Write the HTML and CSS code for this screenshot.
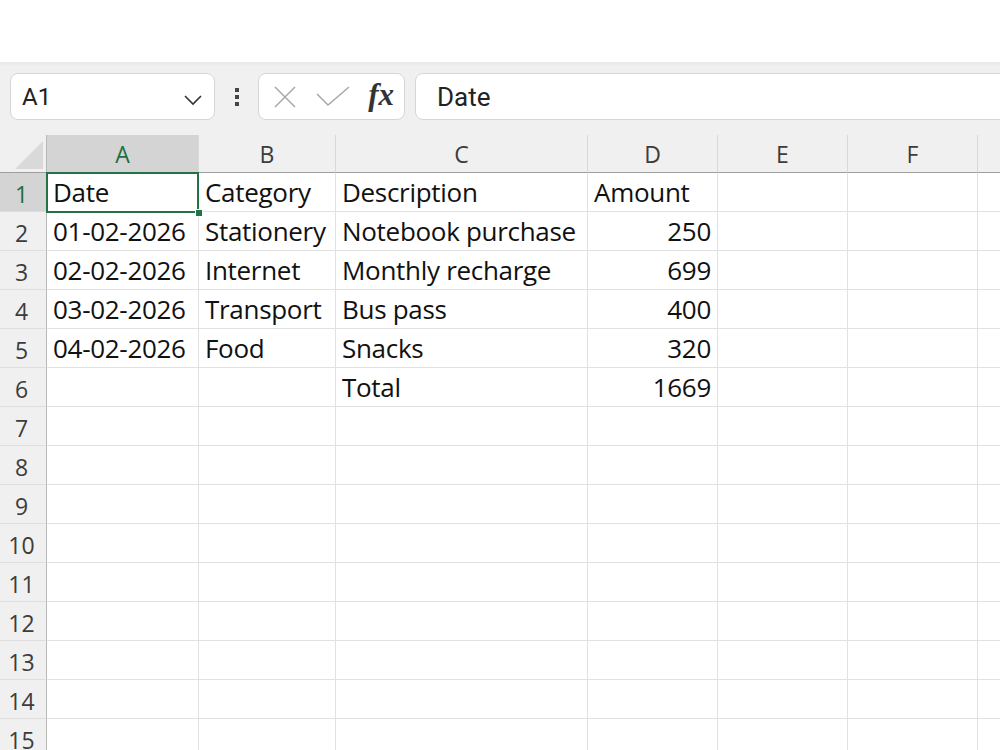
FILE: index.html
```html
<!DOCTYPE html>
<html lang="en">
  <head>
    <meta charset="UTF-8">
    <meta name="viewport" content="width=device-width, initial-scale=1.0">
    <title>Expenses</title>
    <link rel="stylesheet" href="styles.css">
  </head>
  <body>
    <div class="top-blank"></div>

    <div class="toolbar">
      <div class="name-box">
        <span>A1</span>
        <svg class="chevron" width="20" height="12" viewBox="0 0 20 12">
          <path d="M2 2 L10 10 L18 2" fill="none" stroke="#333" stroke-width="1.6"/>
        </svg>
      </div>
      <div class="more">
        <svg width="6" height="20" viewBox="0 0 6 20">
          <rect x="1" y="1" width="4" height="4" fill="#444"/>
          <rect x="1" y="8" width="4" height="4" fill="#444"/>
          <rect x="1" y="15" width="4" height="4" fill="#444"/>
        </svg>
      </div>
      <div class="fx-box">
        <svg width="24" height="24" viewBox="0 0 24 24">
          <path d="M2 2 L22 22 M22 2 L2 22" stroke="#a8a8a8" stroke-width="1.5"/>
        </svg>
        <svg width="34" height="22" viewBox="0 0 34 22">
          <path d="M1 8 L12 19 L33 1" fill="none" stroke="#a8a8a8" stroke-width="1.5"/>
        </svg>
        <span class="fx">fx</span>
      </div>
      <div class="formula">Date</div>
    </div>

    <div class="sheet">
      <div class="corner"><span class="tri"></span></div>
      <div class="col-head selected">A</div>
      <div class="col-head">B</div>
      <div class="col-head">C</div>
      <div class="col-head">D</div>
      <div class="col-head">E</div>
      <div class="col-head">F</div>
      <div class="col-head"></div>

      <div class="row-head selected">1</div>
      <div class="cell active">Date</div>
      <div class="cell">Category</div>
      <div class="cell">Description</div>
      <div class="cell">Amount</div>
      <div class="cell"></div><div class="cell"></div><div class="cell"></div>

      <div class="row-head">2</div>
      <div class="cell">01-02-2026</div>
      <div class="cell">Stationery</div>
      <div class="cell">Notebook purchase</div>
      <div class="cell num">250</div>
      <div class="cell"></div><div class="cell"></div><div class="cell"></div>

      <div class="row-head">3</div>
      <div class="cell">02-02-2026</div>
      <div class="cell">Internet</div>
      <div class="cell">Monthly recharge</div>
      <div class="cell num">699</div>
      <div class="cell"></div><div class="cell"></div><div class="cell"></div>

      <div class="row-head">4</div>
      <div class="cell">03-02-2026</div>
      <div class="cell">Transport</div>
      <div class="cell">Bus pass</div>
      <div class="cell num">400</div>
      <div class="cell"></div><div class="cell"></div><div class="cell"></div>

      <div class="row-head">5</div>
      <div class="cell">04-02-2026</div>
      <div class="cell">Food</div>
      <div class="cell">Snacks</div>
      <div class="cell num">320</div>
      <div class="cell"></div><div class="cell"></div><div class="cell"></div>

      <div class="row-head">6</div>
      <div class="cell"></div>
      <div class="cell"></div>
      <div class="cell">Total</div>
      <div class="cell num">1669</div>
      <div class="cell"></div><div class="cell"></div><div class="cell"></div>

      <div class="row-head">7</div>
      <div class="cell"></div><div class="cell"></div><div class="cell"></div><div class="cell"></div><div class="cell"></div><div class="cell"></div><div class="cell"></div>
      <div class="row-head">8</div>
      <div class="cell"></div><div class="cell"></div><div class="cell"></div><div class="cell"></div><div class="cell"></div><div class="cell"></div><div class="cell"></div>
      <div class="row-head">9</div>
      <div class="cell"></div><div class="cell"></div><div class="cell"></div><div class="cell"></div><div class="cell"></div><div class="cell"></div><div class="cell"></div>
      <div class="row-head">10</div>
      <div class="cell"></div><div class="cell"></div><div class="cell"></div><div class="cell"></div><div class="cell"></div><div class="cell"></div><div class="cell"></div>
      <div class="row-head">11</div>
      <div class="cell"></div><div class="cell"></div><div class="cell"></div><div class="cell"></div><div class="cell"></div><div class="cell"></div><div class="cell"></div>
      <div class="row-head">12</div>
      <div class="cell"></div><div class="cell"></div><div class="cell"></div><div class="cell"></div><div class="cell"></div><div class="cell"></div><div class="cell"></div>
      <div class="row-head">13</div>
      <div class="cell"></div><div class="cell"></div><div class="cell"></div><div class="cell"></div><div class="cell"></div><div class="cell"></div><div class="cell"></div>
      <div class="row-head">14</div>
      <div class="cell"></div><div class="cell"></div><div class="cell"></div><div class="cell"></div><div class="cell"></div><div class="cell"></div><div class="cell"></div>
      <div class="row-head">15</div>
      <div class="cell"></div><div class="cell"></div><div class="cell"></div><div class="cell"></div><div class="cell"></div><div class="cell"></div><div class="cell"></div>
    </div>
  </body>
</html>
```

FILE: styles.css
```css
body {
  margin: 0;
  padding: 0;
  background-color: #fff;
  font-family: "Open Sans", "Noto Sans", sans-serif;
  color: #111;
  overflow: hidden;
  width: 1000px;
  height: 750px;
}

.top-blank {
  height: 62px;
  background-color: #fff;
}

.toolbar {
  height: 73px;
  box-sizing: border-box;
  padding: 11px 0 0 10px;
  display: flex;
  align-items: flex-start;
  background: linear-gradient(#e8e8e8, #f0f0f0 4px);
}

.name-box,
.fx-box,
.formula {
  height: 47px;
  box-sizing: border-box;
  background-color: #fff;
  border: 1px solid #d6d6d6;
  border-radius: 8px;
  display: flex;
  align-items: center;
}

.name-box {
  width: 205px;
  padding: 0 11px 0 11px;
  justify-content: space-between;
  font-family: Roboto, "Open Sans", sans-serif;
  font-size: 24px;
  color: #222;
}

.chevron {
  margin-top: 6px;
}

.more {
  width: 43px;
  height: 47px;
  display: flex;
  align-items: center;
  justify-content: center;
}

.fx-box {
  width: 147px;
  padding: 0 10px 0 14px;
  justify-content: space-between;
}

.fx {
  font-family: "Liberation Serif", serif;
  font-style: italic;
  font-weight: bold;
  font-size: 31px;
  color: #333;
  margin-top: -4px;
}

.formula {
  flex: 1;
  margin-left: 10px;
  margin-right: -20px;
  padding-left: 21px;
  font-family: Roboto, "Open Sans", sans-serif;
  font-size: 26px;
  color: #222;
}

.sheet {
  display: grid;
  grid-template-columns: 47px 152px 137px 252px 130px 130px 130px 130px;
  grid-template-rows: 38px;
  grid-auto-rows: 39px;
  background-color: #fff;
}

.corner,
.col-head,
.row-head {
  background-color: #f0f0f0;
  color: #3c3c3c;
  font-size: 23px;
  box-sizing: border-box;
}

.corner {
  position: relative;
  border-right: 1px solid #b8b8b8;
  border-bottom: 1px solid #9e9e9e;
}

.tri {
  position: absolute;
  right: 3px;
  bottom: 3px;
  width: 0;
  height: 0;
  border-left: 28px solid transparent;
  border-bottom: 28px solid #d9d9d9;
}

.col-head {
  display: flex;
  align-items: center;
  justify-content: center;
  border-right: 1px solid #d8d8d8;
  border-bottom: 1px solid #9e9e9e;
  padding-top: 1px;
}

.row-head {
  display: flex;
  align-items: flex-end;
  justify-content: center;
  padding: 0 3px 5px 0;
  border-right: 1px solid #b8b8b8;
  border-bottom: 1px solid #dedede;
  line-height: 1;
}

.col-head.selected,
.row-head.selected {
  background-color: #d4d4d4;
  color: #1e6e41;
}

.cell {
  display: flex;
  align-items: flex-end;
  box-sizing: border-box;
  padding: 0 6px 6px 6px;
  font-size: 26px;
  line-height: 26px;
  letter-spacing: -0.3px;
  white-space: nowrap;
  border-right: 1px solid #e1e1e1;
  border-bottom: 1px solid #e1e1e1;
}

.cell.num {
  justify-content: flex-end;
}

.cell.active {
  position: relative;
}

.cell.active::before {
  content: "";
  position: absolute;
  left: -1px;
  top: -1px;
  right: -1px;
  bottom: -2px;
  border: 2px solid #217346;
  z-index: 1;
}

.cell.active::after {
  content: "";
  position: absolute;
  right: -5px;
  bottom: -6px;
  width: 6px;
  height: 6px;
  background-color: #217346;
  border: 1px solid #fff;
  z-index: 2;
}
```
